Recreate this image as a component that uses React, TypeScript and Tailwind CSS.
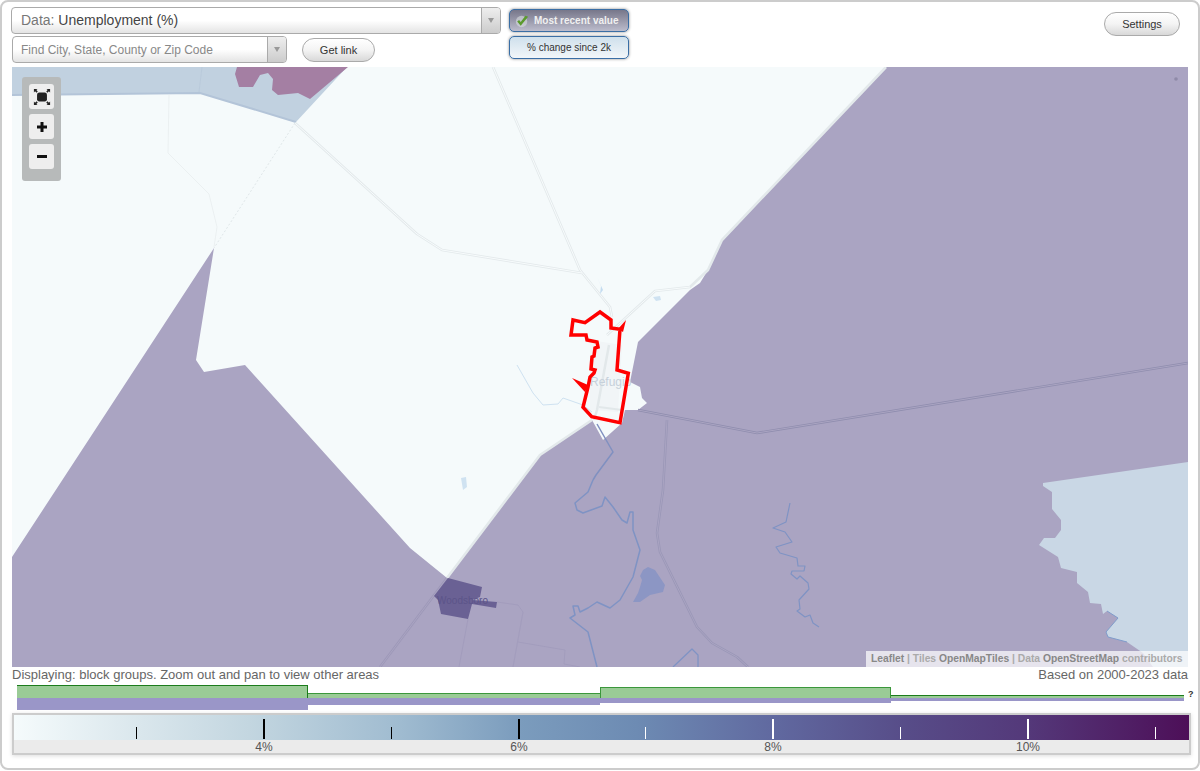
import React from "react";

const river = "593,480 588,492 575,503 577,510 583,513 602,506 605,497 613,507 622,520 627,523 630,512 633,512 633,530 640,550 633,577 620,600 610,608 597,602 588,608 580,612 578,606 573,606 575,615 570,618 588,632 597,667";
const river2 = "790,503 786,522 773,528 785,532 792,542 776,547 780,553 797,558 798,566 805,566 804,571 792,571 791,574 797,579 800,576 808,583 809,589 799,600 800,609 797,611 805,617 810,615 813,623 819,627";
const mainRoad = "493,67 580,270 610,307 612,317";
const westRoad = "295,123 417,234 442,250 582,273";
const eastRoad = "638,410 757,433 1188,363";
const southRoad = "667,420 663,490 657,533 660,552 697,627 712,643 737,657 748,667";

function MapDrawing() {
  return (
    <svg viewBox="12 67 1176 600" className="block w-full h-full">
      <rect x="12" y="67" width="1176" height="600" fill="#f5fafb" />
      {/* top-left blue */}
      <polygon points="12,67 347,67 296,122 200,93 12,95" fill="#c1d1e0" />
      <polyline points="12,95 200,93 296,122" fill="none" stroke="#b3c4d8" strokeWidth="2" />
      <polyline points="202,67 199,92" fill="none" stroke="#b6c6d8" strokeWidth="0.6" />
      <polygon points="237,67 235,74 239,87 253,87 260,75 268,73 273,79 272,90 278,95 298,93 310,99 348,67" fill="#a47fa3" />
      {/* purple */}
      <polygon points="886,67 1188,67 1188,667 380,667 447,578 540,455 592,420 603,440 622,423 625,410 638,410 647,403 642,398 640,387 630,382 635,357 638,342 690,290 700,283 708,270 722,240" fill="#aaa4c2" />
      <polygon points="12,557 214,248 196,360 204,372 245,365 410,548 447,578 380,667 12,667" fill="#aaa4c2" />
      {/* right blue */}
      <polygon points="1043,483 1188,462 1188,667 1153,667 1143,653 1127,642 1108,637 1106,632 1118,618 1107,611 1103,614 1101,604 1090,603 1088,592 1077,583 1077,572 1061,568 1058,557 1039,545 1044,538 1055,538 1061,530 1061,520 1052,509 1052,492 1043,486" fill="#c9d7e5" />
      <polyline points="1107,611 1118,618 1106,632 1108,637 1127,642" fill="none" stroke="#7f9ccb" strokeWidth="1" />
      {/* roads on light */}
      <g fill="none" stroke="#e3e9eb" strokeWidth="2.6" strokeLinejoin="round">
        <polyline points={mainRoad} />
        <polyline points={westRoad} />
        <polyline points="607,335 655,291 690,287 708,270 722,240 886,67" />
        <polyline points="447,578 540,455 592,420" />
      </g>
      <g fill="none" stroke="#f7fbfc" strokeWidth="1">
        <polyline points={mainRoad} />
        <polyline points={westRoad} />
        <polyline points="607,335 655,291 690,287" />
      </g>
      <polyline points="295,123 214,248" fill="none" stroke="#dfe6e8" strokeWidth="1" strokeDasharray="2 2" />
      <polyline points="169,95 168,153 209,194 217,227 214,247" fill="none" stroke="#e8eeef" strokeWidth="0.8" />
      {/* light rivers */}
      <polyline points="517,365 533,393 543,405 558,404 563,398 583,405 592,412" fill="none" stroke="#cfe2f1" strokeWidth="1" />
      <polygon points="597,277 603,290 600,294 601,286" fill="#c4dcf0" />
      <polygon points="461,478 466,477 467,487 463,490" fill="#cfe2f1" />
      <polygon points="653,297 660,296 661,300 656,301" fill="#cfe2f1" />
      {/* town area */}
      <polygon points="590,340 622,345 618,412 590,410" fill="#f1f5f7" />
      <polyline points="609,345 597,410 594,420" fill="none" stroke="#e2e8ea" strokeWidth="2.5" />
      <polyline points="599,407 622,410" fill="none" stroke="#e2e8ea" strokeWidth="2" />
      {/* roads on purple */}
      <polyline points={eastRoad} fill="none" stroke="#8f8dae" strokeWidth="2.5" />
      <polyline points={southRoad} fill="none" stroke="#9a97b7" strokeWidth="2.5" strokeLinejoin="round" />
      <polyline points="380,667 447,578" fill="none" stroke="#9d98b8" strokeWidth="2.5" />
      <g fill="none" stroke="#aaa4c2" strokeWidth="1" strokeLinejoin="round">
        <polyline points={eastRoad} />
        <polyline points={southRoad} />
        <polyline points="380,667 447,578" />
      </g>
      <g fill="none" stroke="#9f9aba" strokeWidth="0.7">
        <polyline points="497,602 518,605 523,612 513,667" />
        <polyline points="518,642 565,650 564,664 580,667" />
        <polyline points="468,619 459,667" />
      </g>
      {/* blue rivers */}
      <g fill="none" stroke="#7f93c4" strokeWidth="1.5" strokeLinejoin="round">
        <polyline points="597,424 613,452 596,475 593,480" stroke="#8090c0" />
        <polyline points={river} />
        <polyline points={river2} strokeWidth="1.2" />
        <polyline points="673,667 692,649 698,655 698,667" strokeWidth="1.3" />
      </g>
      <polygon points="648,567 655,570 665,585 663,592 650,595 640,602 633,602 638,593 640,587 642,580 640,576 643,570" fill="#8c96c4" />
      {/* woodsboro */}
      <polygon points="448,578 482,587 480,597 472,600 497,602 496,608 472,604 468,619 441,614 438,600 434,596" fill="#6a6194" />
      <text x="437" y="604" fontSize="10" fontFamily="'Liberation Sans',sans-serif" fill="#5c5489">Woodsboro</text>
      <text x="590" y="386" fontSize="12" fontFamily="'Liberation Sans',sans-serif" fill="#c6d0da">Refugio</text>
      {/* red outline */}
      <polygon points="572,378 588,385 585,392" fill="#ff0000" />
      <polygon points="626,320 618,329 623,332" fill="#ff0000" />
      <polygon points="573,320 585,322.7 600,312 611,320 611,328 620,329.3 617,370 628.3,373.3 620,422.7 591.7,416.7 583,407.3 588,387 590,377 594,373 595,370 591,369 592,357 594,356 595,348 598,347 597,342 587,340 586,335 571,335" fill="none" stroke="#ff0000" strokeWidth="3.5" strokeLinejoin="miter" />
      <circle cx="1176" cy="79" r="1.8" fill="#8f8aa8" />
    </svg>
  );
}

function Ctrl({ children }: { children: React.ReactNode }) {
  return <div className="w-[25px] h-[25px] bg-[#eeeeee] rounded-[3px] flex items-center justify-center">{children}</div>;
}

const Arrow = () => (
  <div className="w-0 h-0 border-l-[3px] border-r-[3px] border-t-[5px] border-l-transparent border-r-transparent border-t-[#999999]" />
);

function Tick({ cls }: { cls: string }) {
  return <div className={"absolute bottom-px " + cls} />;
}

export default function App() {
  return (
    <div className="w-[1200px] h-[770px] border-2 border-[#cccccc] rounded-[8px] bg-white px-[10px] font-['Liberation_Sans',Arial,sans-serif] box-border overflow-hidden">
      <div className="flex h-[65px]">
        <div className="w-[490px] ml-[-1px] pt-[5px] shrink-0">
          <div className="h-[27px] flex border border-[#aaaaaa] rounded-[4px] bg-gradient-to-b from-white via-white to-[#e4e4e4] overflow-hidden">
            <div className="flex-1 pl-[9px] text-[14px] leading-[24px] text-[#777777]">Data: <span className="text-[#444444]">Unemployment (%)</span></div>
            <div className="w-[19px] border-l border-[#aaaaaa] bg-gradient-to-b from-[#eeeeee] to-[#cccccc] flex items-center justify-center"><Arrow /></div>
          </div>
          <div className="flex mt-[2px] ml-[1px]">
            <div className="w-[275px] h-[27px] flex border border-[#aaaaaa] rounded-[4px] bg-gradient-to-b from-white via-white to-[#e4e4e4] overflow-hidden">
              <div className="flex-1 pl-[8px] text-[12px] leading-[27px] text-[#888888]">Find City, State, County or Zip Code</div>
              <div className="w-[19px] border-l border-[#aaaaaa] bg-gradient-to-b from-[#eeeeee] to-[#cccccc] flex items-center justify-center"><Arrow /></div>
            </div>
            <button className="ml-[15px] mt-[2px] w-[73px] h-[24px] rounded-full border border-[#aaaaaa] bg-gradient-to-b from-white via-[#f4f4f4] to-[#d8d8d8] text-[11px] text-[#333333]">Get link</button>
          </div>
        </div>
        <div className="ml-[8px] pt-[7px] flex flex-col gap-[4px] shrink-0">
          <div className="w-[120px] h-[23px] rounded-[5px] border border-[#3a6ea5] bg-gradient-to-b from-[#77778a] to-[#bcbccc] flex items-center pl-[5px] gap-[5px] text-[10px] font-bold text-[#f0f0f0] shadow-[0_0_3px_#888888] whitespace-nowrap">
            <svg viewBox="0 0 16 16" className="w-[14px] h-[14px] shrink-0">
              <circle cx="7.5" cy="8.5" r="6.5" fill="#d8dde0" opacity="0.6" />
              <path d="M2.5 8.5 L6.5 13.5 L15 3 L12 2 L6.5 9 L4.7 6.8 Z" fill="#5b9a2e" />
            </svg>
            Most recent value
          </div>
          <div className="w-[120px] h-[23px] rounded-[5px] border border-[#3a6ea5] bg-gradient-to-b from-[#cfe0ec] to-[#f2f6f9] flex items-center justify-center text-[10px] text-[#333333] shadow-[0_0_3px_#888888] whitespace-nowrap">% change since 2k</div>
        </div>
        <button className="ml-auto mr-[8px] mt-[10px] w-[76px] h-[24px] rounded-full border border-[#aaaaaa] bg-gradient-to-b from-white via-[#f4f4f4] to-[#d8d8d8] text-[11px] text-[#333333]">Settings</button>
      </div>

      <div className="relative w-[1176px] h-[600px] overflow-hidden">
        <MapDrawing />
        <div className="absolute left-[10px] top-[10px] w-[39px] h-[104px] bg-[#b7baba] rounded-[3px] pt-[7px] flex flex-col items-center gap-[5px]">
          <Ctrl>
            <svg viewBox="0 0 20 20" className="w-[18px] h-[18px]">
              <rect x="4.5" y="5" width="11" height="10" rx="2.5" fill="#222222" />
              <path d="M1 1h4l-1.3 1.3 1.6 1.6-1.4 1.4-1.6-1.6L1 5zM19 1v4l-1.3-1.3-1.6 1.6-1.4-1.4 1.6-1.6L15 1zM1 19v-4l1.3 1.3 1.6-1.6 1.4 1.4-1.6 1.6L5 19zM19 19h-4l1.3-1.3-1.6-1.6 1.4-1.4 1.6 1.6L19 15z" fill="#222222" />
            </svg>
          </Ctrl>
          <Ctrl>
            <svg viewBox="0 0 10 10" className="w-[10px] h-[10px]"><path d="M3.5 0h3v3.5H10v3H6.5V10h-3V6.5H0v-3h3.5z" fill="#111111" /></svg>
          </Ctrl>
          <Ctrl>
            <div className="w-[10px] h-[3px] bg-[#111111]" />
          </Ctrl>
        </div>
        <div className="absolute right-0 bottom-0 w-[322px] h-[16px] bg-white/70 text-[10.3px] leading-[16px] pl-[5px] text-[#aaaaaa] whitespace-nowrap font-bold">
          <span className="text-[#888888]">Leaflet</span> | Tiles <span className="text-[#888888]">OpenMapTiles</span> | Data <span className="text-[#888888]">OpenStreetMap</span> contributors
        </div>
      </div>

      <div className="h-[18px] flex justify-between items-start text-[13px] leading-[16px] text-[#666666]">
        <span>Displaying: block groups. Zoom out and pan to view other areas</span>
        <span>Based on 2000-2023 data</span>
      </div>

      <div className="relative ml-[5px] flex w-[1167px]">
        <div className="w-[291px]">
          <div className="h-[13px] flex items-end"><div className="w-full h-[13px] bg-[#9acb96] border-t border-r border-[#1c7c1c]" /></div>
          <div className="h-[12px]"><div className="w-full h-[12px] bg-[#9a96c8]" /></div>
        </div>
        <div className="w-[292px]">
          <div className="h-[13px] flex items-end"><div className="w-full h-[5px] bg-[#9acb96] border-t border-[#3b973b]" /></div>
          <div className="h-[12px]"><div className="w-full h-[7px] bg-[#9a96c8]" /></div>
        </div>
        <div className="w-[291px]">
          <div className="h-[13px] flex items-end"><div className="w-full h-[11px] bg-[#9acb96] border-t border-l border-r border-[#3b973b]" /></div>
          <div className="h-[12px]"><div className="w-full h-[5px] bg-[#9a96c8]" /></div>
        </div>
        <div className="w-[293px]">
          <div className="h-[13px] flex items-end"><div className="w-full h-[3px] bg-[#9acb96] border-t border-[#1c7c1c]" /></div>
          <div className="h-[12px]"><div className="w-full h-[3px] bg-[#9a96c8]" /></div>
        </div>
        <div className="absolute left-[1171px] top-[4px] text-[9px] leading-[10px] font-bold text-[#333333]">?</div>
      </div>

      <div className="relative mt-[3px] w-[1179px] h-[42px] border-2 border-[#cccccc] shadow-[0_1px_4px_#dddddd]">
        <div className="relative h-[25px] bg-[linear-gradient(to_right,#f5fbfc_0%,#d9e6ec_11%,#c3d6e0_20%,#9fbbd0_33%,#7b9cbd_43%,#6d8bb3_53%,#60689f_65%,#574c88_76%,#54397a_86%,#4d0f58_100%)]">
          <Tick cls="left-[122px] w-px h-[12px] bg-black" />
          <Tick cls="left-[249px] w-[2px] h-[20px] bg-black" />
          <Tick cls="left-[377px] w-px h-[12px] bg-black" />
          <Tick cls="left-[504px] w-[2px] h-[20px] bg-black" />
          <Tick cls="left-[631px] w-px h-[12px] bg-white" />
          <Tick cls="left-[758px] w-[2px] h-[20px] bg-white" />
          <Tick cls="left-[886px] w-px h-[12px] bg-white" />
          <Tick cls="left-[1013px] w-[2px] h-[20px] bg-white" />
          <Tick cls="left-[1141px] w-px h-[12px] bg-white" />
        </div>
        <div className="relative h-[13px] bg-[#ebebeb] text-[12px] leading-[14px] text-[#555555]">
          <span className="absolute left-[250px] -translate-x-1/2">4%</span>
          <span className="absolute left-[505px] -translate-x-1/2">6%</span>
          <span className="absolute left-[759px] -translate-x-1/2">8%</span>
          <span className="absolute left-[1014px] -translate-x-1/2">10%</span>
        </div>
      </div>
    </div>
  );
}
